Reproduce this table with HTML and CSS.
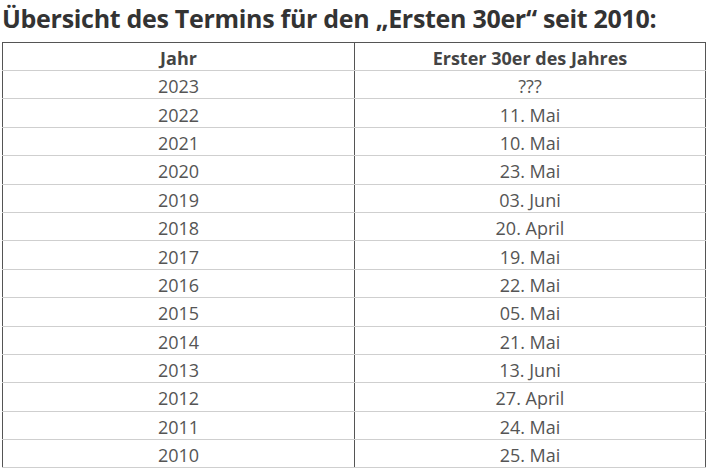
FILE: index.html
```html
<!DOCTYPE html>
<html lang="de">
<head>
<meta charset="utf-8">
<link rel="stylesheet" href="styles.css">
</head>
<body>
<h2 class="title">Übersicht des Termins für den „Ersten 30er“ seit 2010:</h2>
<table class="dates">
  <thead>
    <tr><th>Jahr</th><th>Erster 30er des Jahres</th></tr>
  </thead>
  <tbody>
    <tr><td>2023</td><td>???</td></tr>
    <tr><td>2022</td><td>11. Mai</td></tr>
    <tr><td>2021</td><td>10. Mai</td></tr>
    <tr><td>2020</td><td>23. Mai</td></tr>
    <tr><td>2019</td><td>03. Juni</td></tr>
    <tr><td>2018</td><td>20. April</td></tr>
    <tr><td>2017</td><td>19. Mai</td></tr>
    <tr><td>2016</td><td>22. Mai</td></tr>
    <tr><td>2015</td><td>05. Mai</td></tr>
    <tr><td>2014</td><td>21. Mai</td></tr>
    <tr><td>2013</td><td>13. Juni</td></tr>
    <tr><td>2012</td><td>27. April</td></tr>
    <tr><td>2011</td><td>24. Mai</td></tr>
    <tr><td>2010</td><td>25. Mai</td></tr>
  </tbody>
</table>
</body>
</html>
```
FILE: styles.css
```css
html, body {
  margin: 0;
  padding: 0;
  background: #fff;
}
body {
  font-family: "Open Sans", "Noto Sans", sans-serif;
  color: #555;
}
.title {
  margin: 0;
  padding: 2px 0 0 2px;
  height: 42px;
  box-sizing: border-box;
  font-size: 25px;
  font-weight: 700;
  line-height: 32px;
  color: #333;
  white-space: nowrap;
  letter-spacing: -0.3px;
}
.dates {
  margin-left: 2px;
  width: 704px;
  border-collapse: collapse;
  border-top: 1px solid #555;
  border-left: 1px solid #555;
  border-right: 1px solid #555;
  table-layout: fixed;
}
.dates th, .dates td {
  text-align: center;
  padding: 3px 0 0;
  border-bottom: 1px solid #cfcfcf;
  border-left: 1px solid #555;
  line-height: 22px;
}
.dates th {
  height: 24px;
  font-weight: 700;
  color: #444;
  font-size: 18px;
  letter-spacing: 0;
}
.dates td {
  height: 24.4px;
  color: #555;
  font-size: 18px;
}
.dates th:first-child, .dates td:first-child {
  width: 351px;
}
```
